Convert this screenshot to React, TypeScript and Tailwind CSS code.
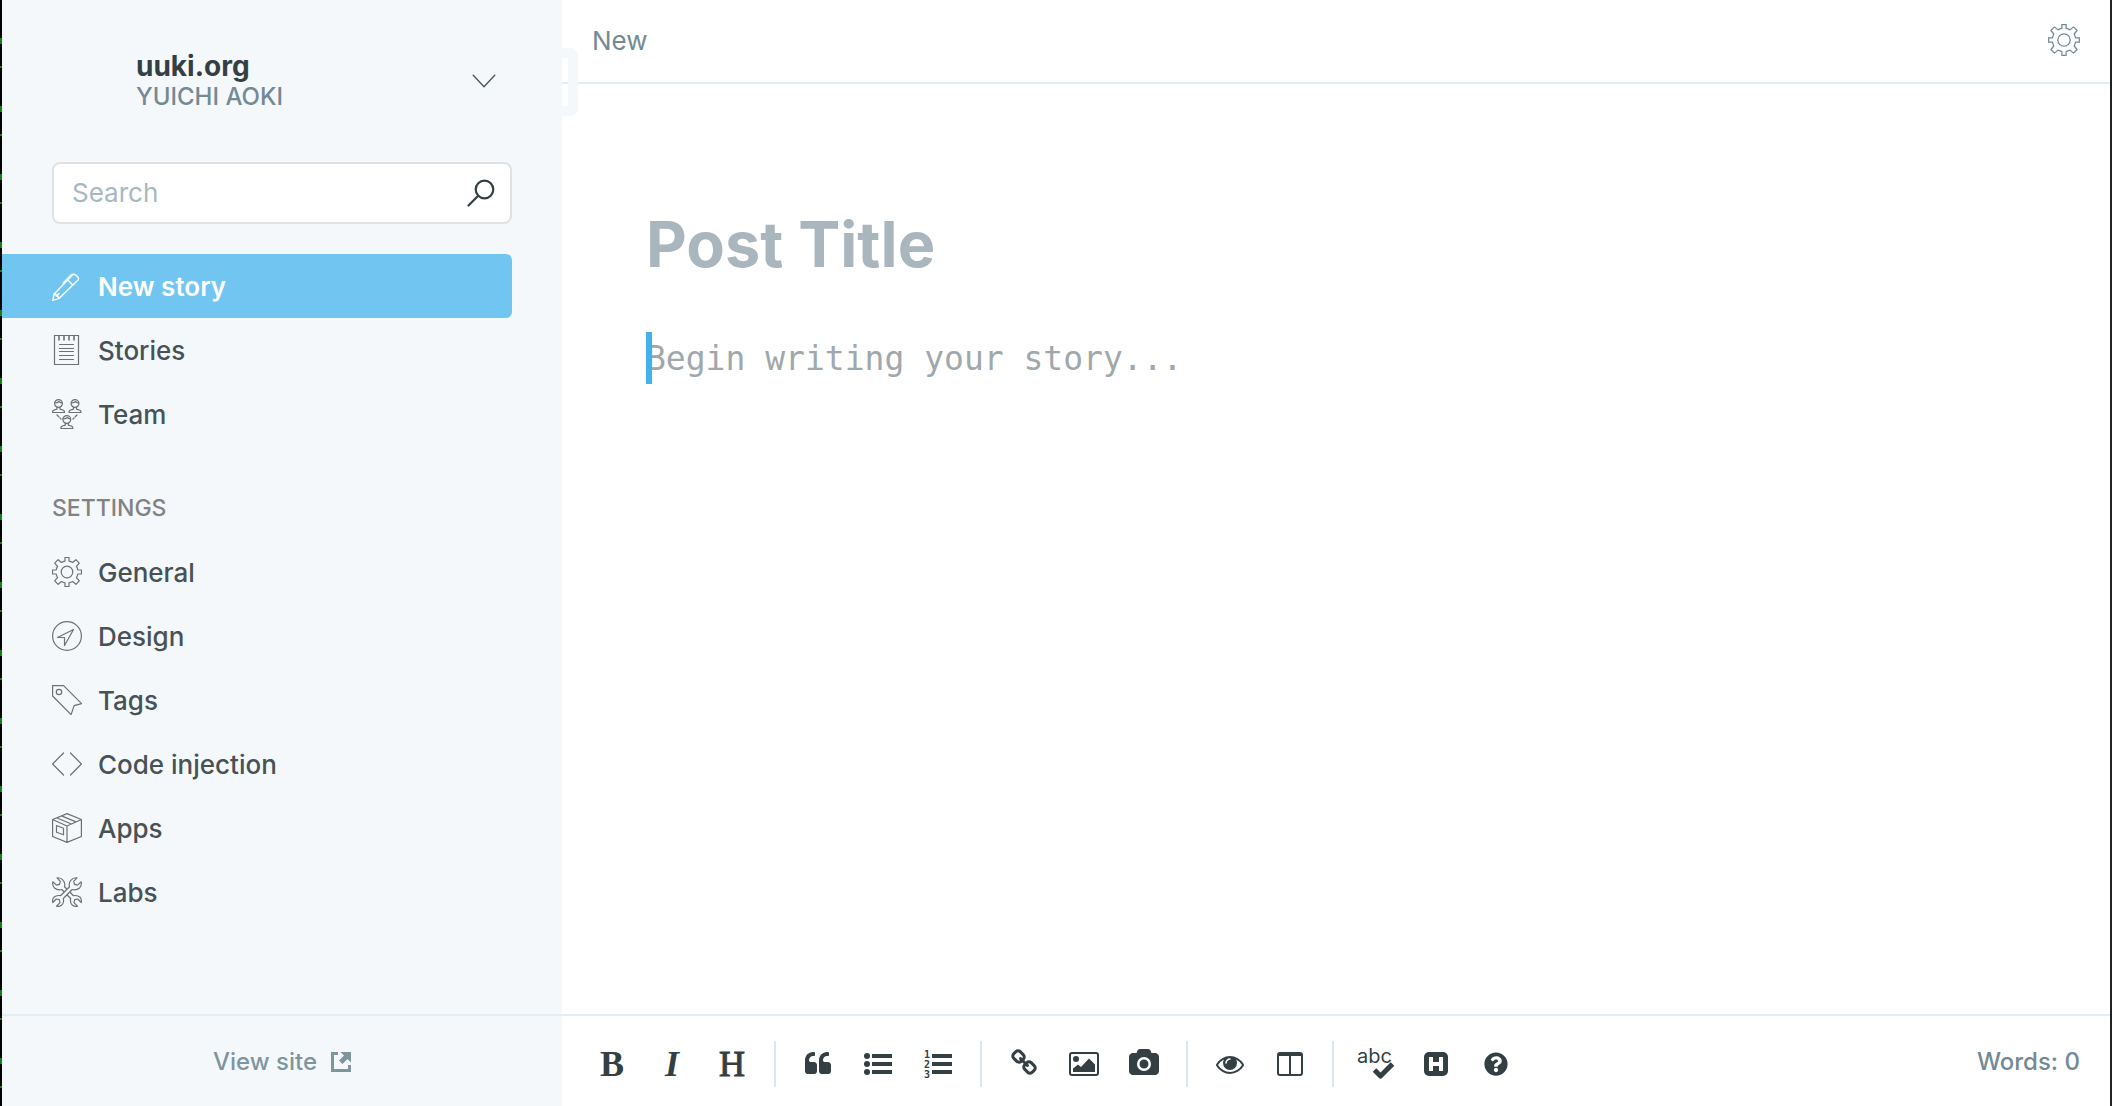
import type { ReactNode } from "react";
import { FaQuestionCircle } from "react-icons/fa";

const GEAR =
  "M13 .5h4v3.7q2 .4 3.6 1.3L23.9 2.7l3.4 3.4-2.8 3.3q.9 1.6 1.3 3.6h3.7v4h-3.7q-.4 2-1.3 3.6l2.8 3.3-3.4 3.4-3.3-2.8q-1.6.9-3.6 1.3v3.7h-4v-3.7q-2-.4-3.6-1.3l-3.3 2.8-3.4-3.4 2.8-3.3q-.9-1.6-1.3-3.6H.5v-4h3.7q.4-2 1.3-3.6L2.7 6.1l3.4-3.4 3.3 2.8q1.6-.9 3.6-1.3z";

function Thin({ children, className = "size-[30px]" }: { children: ReactNode; className?: string }) {
  return (
    <svg
      viewBox="0 0 30 30"
      fill="none"
      stroke="currentColor"
      strokeWidth="1.2"
      strokeLinejoin="round"
      strokeLinecap="round"
      aria-hidden="true"
      className={`shrink-0 ${className}`}
    >
      {children}
    </svg>
  );
}

const gear = (
  <>
    <path d={GEAR} />
    <circle cx="15" cy="15" r="5.8" />
  </>
);

const pen = (
  <g strokeWidth="1.3">
    <path d="M.7 29.300 2.200 23 20.300 4.200q1.800-1.700 3.700 0l1.800 1.800q1.500 1.700 0 3.300L7 27.500z" />
    <path d="M2.200 23q3.600.8 4.800 4.500M4.300 25.300 7 22.500M15.800 9l5.200 5.200M11 12.300l8-8.300q1.300-1.200 2.800-.8" />
  </g>
);

const notebook = (
  <>
    <path strokeLinejoin="miter" d="M2.500 .5h24v29h-24z" />
    <path strokeWidth="1.600" d="M7 1v4M12 1v4M17 1v4M22 1v4" />
    <path d="M7.500 9.500h14M7.500 13.500h14M7.500 16.500h14M7.500 20.500h14M7.500 24.500h14" />
  </>
);

const person = (
  <>
    <circle cx="6.500" cy="4.500" r="3.900" />
    <path d="M2.800 4q2.500 0 4.200-1.500Q8.500 4 10.300 4M5 8.200v1.900L1.500 11.300Q.5 12 .5 13.500h12q0-1.500-1-2.200L8 10.100V8.200" />
  </>
);

const team = (
  <>
    <g>{person}</g>
    <g transform="translate(16.500 0)">{person}</g>
    <g transform="translate(8.300 16)">{person}</g>
    <path strokeDasharray="2.500 1.500" d="M5 16l4 4M25 16l-4 4" />
  </>
);

const compass = (
  <>
    <circle cx="15" cy="15" r="14.400" />
    <path d="M21.500 8.500 5.500 16.500h7v8z" />
  </>
);

const tag = (
  <>
    <path d="M.6.6h11l18 18-7.500 2-3 9L.6 11z" />
    <circle cx="7" cy="7" r="2.700" />
  </>
);

const code = <path d="M11.500 4 .6 15l10.900 11M18.500 4l10.900 11-10.900 11" />;

const box = (
  <path d="M15 .6 29.400 6.500v17L15 29.400.6 23.500v-17zM.6 6.500 15 13l14.400-6.500M15 13v16.400M9.500 2.900 24 8.900M5 5l14.500 6M4.500 12.500l7 2.800v6.500l-7-2.500z" />
);

const tools = (
  <>
    <path d="M9.800 12.500 18.700 21.500q-1 4 1.500 6.500 2.500 2 5.300 1.200l-3.500-3.500.7-3 3-.7 3.500 3.500q.8-3-1.200-5.300-2.500-2.300-6.500-1.500L12.500 9.800q1-4-1.300-6.500Q9 .5 5 .8l3.300 3.500-.8 3-3 .8L.8 4.800Q0 8.500 2.500 11q3 2.500 7.300 1.500z" />
    <path
      className="fill-[#f4f8fb]"
      d="M20.200 12.500 11.300 21.500q1 4-1.500 6.500-2.500 2-5.300 1.200L8 25.700l-.7-3-3-.7-3.500 3.500Q0 22.500 2 20.200q2.500-2.300 6.500-1.500l9-8.900q-1-4 1.300-6.500Q21 .5 25 .8l-3.300 3.500.8 3 3 .8 3.700-3.300q.8 3.700-1.700 6.200-3 2.500-7.300 1.500z"
    />
  </>
);

function NavItem({ icon, label, active }: { icon: ReactNode; label: string; active?: boolean }) {
  return (
    <a
      href="#"
      className={
        active
          ? "mr-[50px] flex h-16 items-center gap-4 rounded-r-md bg-[#71c5f1] pl-[50px] text-[26px] font-semibold text-white"
          : "mr-[50px] flex h-16 items-center gap-4 pl-[50px] text-[26px] font-medium text-[#475256]"
      }
    >
      <Thin className={active ? "size-[30px]" : "size-[30px] text-[#6d7173]"}>{icon}</Thin>
      {label}
    </a>
  );
}

function Tool({ label, children }: { label: string; children: ReactNode }) {
  return (
    <button type="button" aria-label={label} className="flex h-[60px] w-[60px] items-center justify-center">
      {children}
    </button>
  );
}

function Glyph({ box: viewBox = "0 0 1792 1792", className = "size-[28px]", children }: { box?: string; className?: string; children: ReactNode }) {
  return (
    <svg viewBox={viewBox} fill="currentColor" aria-hidden="true" className={className}>
      {children}
    </svg>
  );
}

const Divider = () => <span className="mx-3 h-[46px] w-0.5 bg-[#dae7f1]" />;

const QUOTE =
  "M832 960v384q0 80-56 136t-136 56h-384q-80 0-136-56t-56-136v-704q0-104 40.500-198.500t109.500-163.500 163.500-109.500 198.500-40.500h64q26 0 45 19t19 45v128q0 26-19 45t-45 19h-64q-106 0-181 75t-75 181v32q0 40 28 68t68 28h224q80 0 136 56t56 136z";

function Sidebar() {
  return (
    <aside className="flex w-[560px] shrink-0 flex-col bg-[#f4f8fb]">
      <button type="button" className="mr-[66px] ml-[134px] flex h-[162px] items-center justify-between text-left">
        <span className="flex flex-col">
          <strong className="text-[28px] leading-8 font-bold text-[#343f44]">uuki.org</strong>
          <span className="text-2xl leading-[30px] font-medium text-[#738a94]">YUICHI AOKI</span>
        </span>
        <svg viewBox="0 0 24 14" fill="none" stroke="#4a5255" strokeWidth="1.300" className="h-[14px] w-6" aria-hidden="true">
          <path d="m.8.800 11.200 12L23.200.800" />
        </svg>
      </button>

      <div className="relative mx-[50px] mb-[30px]">
        <input
          type="search"
          aria-label="Search"
          placeholder="Search"
          className="block h-[62px] w-full rounded-lg border-2 border-[#dfe1e3] bg-white pr-16 pb-0.5 pl-[18px] text-[26px] outline-none placeholder:text-[#a9b8bf]"
        />
        <svg viewBox="0 0 28 28" fill="none" stroke="#343f44" strokeWidth="2.200" strokeLinecap="round" className="absolute top-[17px] right-[17px] size-7" aria-hidden="true">
          <circle cx="17.500" cy="10.500" r="8.800" />
          <path d="M11.200 16.800 1.500 26.500" />
        </svg>
      </div>

      <nav aria-label="Main">
        <NavItem icon={pen} label="New story" active />
        <NavItem icon={notebook} label="Stories" />
        <NavItem icon={team} label="Team" />
      </nav>
      <h2 className="mt-[46px] mb-4 pl-[50px] text-[23px] leading-8 font-medium text-[#808284]">SETTINGS</h2>
      <nav aria-label="Settings">
        <NavItem icon={gear} label="General" />
        <NavItem icon={compass} label="Design" />
        <NavItem icon={tag} label="Tags" />
        <NavItem icon={code} label="Code injection" />
        <NavItem icon={box} label="Apps" />
        <NavItem icon={tools} label="Labs" />
      </nav>

      <a href="#" className="mt-auto flex h-[92px] items-center justify-center gap-3.5 border-t-2 border-[#e3edf5] pt-0.5 text-2xl font-medium text-[#7f959e]">
        View site
        <svg viewBox="0 0 20 20" fill="currentColor" className="size-5" aria-hidden="true">
          <path d="M0 0h7v3H3v14h14v-4h3v7H0z" />
          <path d="M9.500 0H20v10.500l-3.500-3.500-5 5L8 8.500l5-5z" />
        </svg>
      </a>
    </aside>
  );
}

function Toolbar() {
  return (
    <footer className="flex h-[92px] shrink-0 items-center justify-between border-t-2 border-[#e3edf5] pt-0.5 pr-[30px] pl-5 text-[#343f44]">
      <div className="flex items-center pt-1" role="toolbar" aria-label="Formatting">
        <Tool label="Bold">
          <span className="font-['Liberation_Serif',serif] text-4xl font-bold">B</span>
        </Tool>
        <Tool label="Italic">
          <span className="font-['Liberation_Serif',serif] text-4xl font-bold italic">I</span>
        </Tool>
        <Tool label="Headline">
          <span className="font-['Liberation_Serif',serif] text-4xl [-webkit-text-stroke:1px_currentColor]">H</span>
        </Tool>
        <Divider />
        <Tool label="Quote">
          <Glyph className="size-[28px]">
            <path d={QUOTE} />
            <path d={QUOTE} transform="translate(896 0)" />
          </Glyph>
        </Tool>
        <Tool label="Bulleted list">
          <Glyph box="0 0 28 28">
            <circle cx="3" cy="6" r="3" />
            <circle cx="3" cy="14" r="3" />
            <circle cx="3" cy="22" r="3" />
            <path d="M8 4h20v4H8zM8 12h20v4H8zM8 20h20v4H8z" />
          </Glyph>
        </Tool>
        <Tool label="Numbered list">
          <Glyph box="0 0 28 36" className="h-9 w-7">
            <g className="font-['DejaVu_Sans_Mono',monospace] text-[10px] font-bold">
              <text x="0" y="12">1</text>
              <text x="0" y="22">2</text>
              <text x="0" y="32">3</text>
            </g>
            <path d="M8 8h20v4H8zM8 16h20v4H8zM8 24h20v4H8z" />
          </Glyph>
        </Tool>
        <Divider />
        <Tool label="Link">
          <Glyph className="mb-0.5 size-[28px]">
            <path d="M1520 1216q0-40-28-68l-208-208q-28-28-68-28-42 0-72 32 3 3 19 18.500t21.500 21.500 15 19 13 25.500 3.500 27.500q0 40-28 68t-68 28q-15 0-27.500-3.500t-25.500-13-19-15-21.500-21.500-18.500-19q-33 31-33 73 0 40 28 68l206 207q27 27 68 27 40 0 68-26l147-146q28-28 28-67zm-703-705q0-40-28-68l-206-207q-28-28-68-28-39 0-68 27l-147 146q-28 28-28 67 0 40 28 68l208 208q27 27 68 27 42 0 72-31-3-3-19-18.500t-21.500-21.500-15-19-13-25.500-3.500-27.500q0-40 28-68t68-28q15 0 27.500 3.500t25.500 13 19 15 21.500 21.500 18.500 19q33-31 33-73zm895 705q0 120-85 203l-147 146q-83 83-203 83-121 0-204-85l-206-207q-83-83-83-203 0-123 88-209l-88-88q-86 88-208 88-120 0-204-84l-208-208q-84-84-84-204t85-203l147-146q83-83 203-83 121 0 204 85l206 207q83 83 83 203 0 123-88 209l88 88q86-88 208-88 120 0 204 84l208 208q84 84 84 204z" />
          </Glyph>
        </Tool>
        <Tool label="Image">
          <Glyph box="0 0 30 24" className="h-6 w-[30px]">
            <rect x="1" y="1" width="28" height="22" rx="2" fill="none" stroke="currentColor" strokeWidth="2" />
            <circle cx="7" cy="7" r="3" />
            <path d="M4 20v-3.500l5-4 3 2.500 8-8.500 6 6V20z" />
          </Glyph>
        </Tool>
        <Tool label="Camera">
          <Glyph box="-64 0 1920 1792" className="mb-0.5 h-7 w-[30px]">
            <path d="M896 672q119 0 203.500 84.500t84.500 203.500-84.500 203.500-203.500 84.500-203.500-84.500-84.500-203.500 84.500-203.500 203.500-84.500zm704-416q106 0 181 75t75 181v896q0 106-75 181t-181 75h-1408q-106 0-181-75t-75-181v-896q0-106 75-181t181-75h224l51-136q19-49 69.500-84.500t103.500-35.500h512q53 0 103.500 35.500t69.500 84.500l51 136h224zm-704 1152q185 0 316.500-131.500t131.500-316.500-131.500-316.500-316.500-131.500-316.500 131.500-131.500 316.500 131.500 316.500 316.500 131.500z" />
          </Glyph>
        </Tool>
        <Divider />
        <Tool label="Preview">
          <Glyph>
            <path d="M1664 960q-152-236-381-353 61 104 61 225 0 185-131.500 316.500t-316.500 131.500-316.500-131.500-131.500-316.500q0-121 61-225-229 117-381 353 133 205 333.500 326.500t434.500 121.500 434.500-121.500 333.500-326.500zm-720-384q0-20-14-34t-34-14q-125 0-214.500 89.500t-89.500 214.500q0 20 14 34t34 14 34-14 14-34q0-86 61-147t147-61q20 0 34-14t14-34zm848 384q0 34-20 69-140 230-376.500 368.500t-499.500 138.500-499.500-139-376.500-368q-20-35-20-69t20-69q140-229 376.500-368t499.500-139 499.500 139 376.500 368q20 35 20 69z" />
          </Glyph>
        </Tool>
        <Tool label="Split view">
          <Glyph box="0 0 26 24" className="h-6 w-[26px]">
            <rect x="1" y="1" width="24" height="22" rx="2" fill="none" stroke="currentColor" strokeWidth="2" />
            <path d="M1 1h24v3H1zM12 3h2v20h-2z" />
          </Glyph>
        </Tool>
        <Divider />
        <Tool label="Spell check">
          <Glyph box="0 0 40 40" className="h-10 w-10">
            <text x="1" y="19" className="font-[Inter,sans-serif] text-[20px]">abc</text>
            <path d="m18.500 26 6 6 12-12" fill="none" stroke="currentColor" strokeWidth="5" strokeLinejoin="round" />
          </Glyph>
        </Tool>
        <Tool label="Hemingway mode">
          <Glyph box="0 0 24 24" className="size-6">
            <rect width="24" height="24" rx="5" />
            <path d="M7 5v14M17 5v14M7 12h10" fill="none" stroke="white" strokeWidth="4" />
          </Glyph>
        </Tool>
        <Tool label="Help">
          <FaQuestionCircle className="size-6" aria-hidden="true" />
        </Tool>
      </div>
      <span className="text-2xl font-medium text-[#738a94]">Words: 0</span>
    </footer>
  );
}

export default function App() {
  return (
    <div className="flex h-screen bg-white font-[Inter,sans-serif]">
      <div className="w-0.5 shrink-0 bg-black bg-[repeating-linear-gradient(#000_0_38px,#12801a_38px_44px,#000_44px_66px,#12801a_66px_68px)]" />
      <Sidebar />
      <main className="relative flex min-w-0 flex-1 flex-col">
        <header className="flex h-[84px] shrink-0 items-center justify-between border-b-2 border-[#e3edf5] px-[30px] pb-0.5 text-[#738a94]">
          <h1 className="text-[26px]">New</h1>
          <button type="button" aria-label="Post settings">
            <Thin className="size-8">{gear}</Thin>
          </button>
        </header>
        <button type="button" aria-label="Collapse menu" className="absolute top-12 left-0 h-[68px] w-4 rounded-r-lg border-y-10 border-r-10 border-[#f4f8fb]" />
        <section className="flex flex-1 flex-col px-[84px] pt-[120px]">
          <input
            aria-label="Post title"
            placeholder="Post Title"
            className="h-20 w-full text-[63px] font-bold outline-none placeholder:text-[#a9b6bd]"
          />
          <div className="relative mt-12 flex flex-1">
            <textarea
              aria-label="Story"
              placeholder="Begin writing your story..."
              className="w-full resize-none font-['DejaVu_Sans_Mono',monospace] text-[33px] leading-[54px] outline-none placeholder:text-[#a0a8ac]"
            />
            <span className="absolute top-0 left-0 h-[52px] w-1.5 bg-[#43b1ed]" />
          </div>
        </section>
        <Toolbar />
      </main>
      <div className="w-0.5 shrink-0 bg-[#222222]" />
    </div>
  );
}
